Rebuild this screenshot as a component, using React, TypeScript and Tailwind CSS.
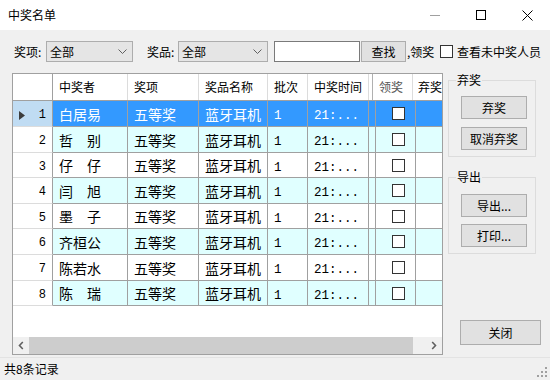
import React from 'react';

const names = ['白居易', '哲\u3000别', '仔\u3000仔', '闫\u3000旭', '墨\u3000子', '齐桓公', '陈若水', '陈\u3000瑞'];
const rowH = ['h-[26px]', 'h-[26px]', 'h-[25px]', 'h-[26px]', 'h-[25px]', 'h-[26px]', 'h-[26px]', 'h-[25px]'];

function Chevron() {
  return (
    <svg width="9" height="5" viewBox="0 0 9 5">
      <path d="M0.5 0.5 L4.5 4.5 L8.5 0.5" fill="none" stroke="#606060" strokeWidth="1" />
    </svg>
  );
}

function Combo({ w }: { w: string }) {
  return (
    <div className={`${w} h-[21px] flex items-center justify-between border border-[#adadad] bg-[#e5e5e5] pl-[3px] pr-[5px] text-[12px] leading-none`}>
      <span>全部</span>
      <Chevron />
    </div>
  );
}

function Btn({ children, cls }: { children: React.ReactNode; cls: string }) {
  return (
    <div className={`${cls} flex items-center justify-center border border-[#adadad] bg-[#e1e1e1] text-[12px] leading-none`}>
      {children}
    </div>
  );
}

function Box() {
  return <div className="w-[13px] h-[13px] border border-[#333333] bg-white" />;
}

export default function App() {
  const head = 'h-full flex items-center pl-[6px] border-r border-[#dcdcdc] text-[12px] whitespace-nowrap overflow-hidden';
  return (
    <div className="w-[550px] h-[380px] overflow-hidden flex flex-col bg-[#f0f0f0] text-black font-['Noto_Sans_CJK_SC',sans-serif]">
      {/* title bar */}
      <div className="h-[30px] bg-white flex items-center justify-between shrink-0">
        <span className="pl-[8px] text-[12px]">中奖名单</span>
        <div className="flex h-full">
          <div className="w-[46px] h-full flex items-center justify-center">
            <svg width="10" height="10" viewBox="0 0 10 10"><path d="M0 5.5 H10" stroke="#a0a0a0" strokeWidth="1" /></svg>
          </div>
          <div className="w-[46px] h-full flex items-center justify-center">
            <svg width="10" height="10" viewBox="0 0 10 10"><rect x="0.5" y="0.5" width="9" height="9" fill="none" stroke="#000" strokeWidth="1" /></svg>
          </div>
          <div className="w-[46px] h-full flex items-center justify-center">
            <svg width="11" height="11" viewBox="0 0 11 11"><path d="M0.5 0.5 L10.5 10.5 M10.5 0.5 L0.5 10.5" stroke="#000" strokeWidth="1" /></svg>
          </div>
        </div>
      </div>

      {/* toolbar */}
      <div className="h-[43px] flex items-center pl-[14px] text-[12px] shrink-0">
        <span className="w-[32px] leading-none">奖项:</span>
        <Combo w="w-[87px]" />
        <span className="ml-[14px] w-[31px] leading-none">奖品:</span>
        <Combo w="w-[90px]" />
        <div className="ml-[6px] w-[86px] h-[21px] border border-[#7a7a7a] bg-white" />
        <Btn cls="ml-[1px] w-[45px] h-[21px]">查找</Btn>
        <span className="ml-[1px] w-[33px] leading-none">,领奖</span>
        <Box />
        <span className="ml-[4px] leading-none">查看未中奖人员</span>
      </div>

      {/* middle */}
      <div className="h-[284px] flex items-start pl-[12px] shrink-0">
        <div className="w-[431px] h-[282px] border border-[#a0a0a0] bg-white flex flex-col overflow-hidden">
          {/* header */}
          <div className="h-[27px] flex border-b border-[#a0a0a0] shrink-0">
            <div className="w-[40px] h-full border-r border-[#a0a0a0]" />
            <div className={`w-[75px] ${head}`}>中奖者</div>
            <div className={`w-[71px] ${head}`}>奖项</div>
            <div className={`w-[69px] ${head}`}>奖品名称</div>
            <div className={`w-[40px] ${head}`}>批次</div>
            <div className={`w-[61px] ${head} border-[#b0b0b0]`}>中奖时间</div>
            <div className="w-[4px] h-full border-r border-[#b0b0b0]" />
            <div className={`w-[40px] ${head} pl-[5px] text-[#555555]`}>领奖</div>
            <div className="flex-1 h-full flex items-center pl-[5px] text-[12px] whitespace-nowrap">弃奖</div>
          </div>
          {/* rows */}
          {names.map((n, i) => {
            const sel = i === 0;
            const bg = sel ? 'bg-[#3399ff] text-white' : i % 2 === 1 ? 'bg-[#e0ffff]' : 'bg-white';
            const base = `h-full flex pl-[6px] border-r border-b border-[#a0a0a0] whitespace-nowrap overflow-hidden ${bg}`;
            const cell = `${base} items-center`;
            const mono = `${base} items-start pt-[9px] font-['Liberation_Mono',monospace] text-[12.5px] leading-none`;
            return (
              <div key={i} className={`${rowH[i]} flex shrink-0`}>
                <div className={`w-[40px] h-full flex items-start justify-between pt-[8px] pl-[6px] pr-[6px] border-r border-r-[#a0a0a0] border-b border-b-[#dcdcdc] ${sel ? 'bg-[#c0dcf3]' : 'bg-white'}`}>
                  <span className="w-[7px] flex items-center h-[12px]">
                    {sel && (
                      <svg width="6" height="9" viewBox="0 0 6 9"><path d="M0 0 L6 4.5 L0 9 Z" fill="#3c3c3c" /></svg>
                    )}
                  </span>
                  <span className="font-['Liberation_Mono',monospace] text-[12px] leading-none">{i + 1}</span>
                </div>
                <div className={`w-[75px] text-[14px] leading-none ${cell}`}>{n}</div>
                <div className={`w-[71px] text-[14px] leading-none ${cell}`}>五等奖</div>
                <div className={`w-[69px] text-[14px] leading-none ${cell}`}>蓝牙耳机</div>
                <div className={`w-[40px] ${mono}`}>1</div>
                <div className={`w-[61px] ${mono}`}>21:...</div>
                <div className={`w-[4px] ${cell} pl-0`} />
                <div className={`w-[40px] ${cell} pl-0 justify-center`}>
                  <Box />
                </div>
                <div className={`flex-1 h-full border-b border-[#a0a0a0] ${bg}`} />
              </div>
            );
          })}
          <div className="flex-1" />
          {/* scrollbar */}
          <div className="h-[17px] flex shrink-0 bg-[#f0f0f0]">
            <div className="w-[16px] h-full flex items-center justify-center">
              <svg width="6" height="9" viewBox="0 0 6 9"><path d="M4.8 1 L1.5 4.5 L4.8 8" fill="none" stroke="#606060" strokeWidth="1.6" /></svg>
            </div>
            <div className="w-[384px] h-full bg-[#cdcdcd]" />
            <div className="flex-1" />
            <div className="w-[17px] h-full flex items-center justify-center">
              <svg width="6" height="9" viewBox="0 0 6 9"><path d="M1.2 1 L4.5 4.5 L1.2 8" fill="none" stroke="#606060" strokeWidth="1.6" /></svg>
            </div>
          </div>
        </div>

        {/* right panel */}
        <div className="ml-[5px] w-[93px] flex flex-col">
          <div className="relative mt-[7px] w-[88px] h-[77px] border border-[#dcdcdc] pt-[15px] pl-[12px] flex flex-col gap-[8px]">
            <span className="absolute -top-[9px] left-[7px] bg-[#f0f0f0] px-[1px] text-[12px] leading-[16px]">弃奖</span>
            <Btn cls="w-[66px] h-[23px]">弃奖</Btn>
            <Btn cls="w-[66px] h-[23px]">取消弃奖</Btn>
          </div>
          <div className="relative mt-[20px] w-[88px] h-[77px] border border-[#dcdcdc] pt-[16px] pl-[12px] flex flex-col gap-[7px]">
            <span className="absolute -top-[9px] left-[7px] bg-[#f0f0f0] px-[1px] text-[12px] leading-[16px]">导出</span>
            <Btn cls="w-[66px] h-[23px]">导出...</Btn>
            <Btn cls="w-[66px] h-[23px]">打印...</Btn>
          </div>
          <Btn cls="mt-[66px] ml-[12px] w-[81px] h-[25px]">关闭</Btn>
        </div>
      </div>

      {/* status bar */}
      <div className="h-[23px] border-t border-[#e3e3e3] flex items-center justify-between shrink-0">
        <span className="pl-[4px] text-[12px] leading-none">共8条记录</span>
        <svg className="self-end mb-[2px] mr-[2px]" width="12" height="12" viewBox="0 0 12 12">
          <rect x="9" y="1" width="2" height="2" fill="#a0a0a0" />
          <rect x="9" y="5" width="2" height="2" fill="#a0a0a0" />
          <rect x="5" y="5" width="2" height="2" fill="#a0a0a0" />
          <rect x="9" y="9" width="2" height="2" fill="#a0a0a0" />
          <rect x="5" y="9" width="2" height="2" fill="#a0a0a0" />
          <rect x="1" y="9" width="2" height="2" fill="#a0a0a0" />
        </svg>
      </div>
    </div>
  );
}
